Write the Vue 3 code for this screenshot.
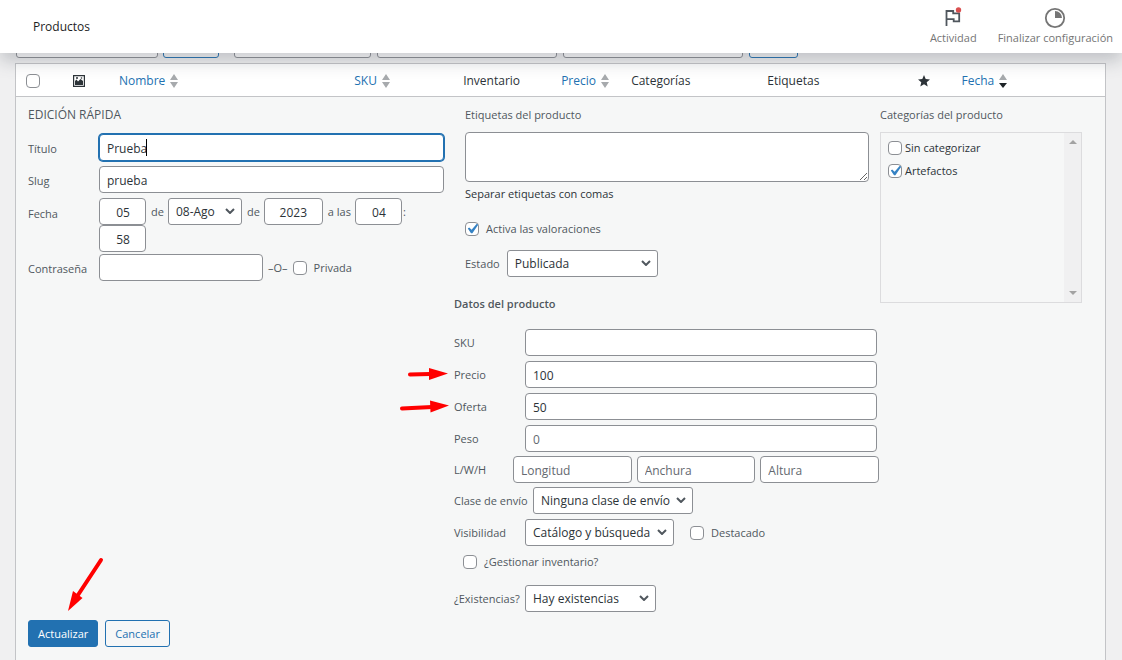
<script setup>
import { ref } from 'vue'

const titulo = ref('Prueba')
const slug = ref('prueba')
const dia = ref('05')
const anio = ref('2023')
const hora = ref('04')
const minuto = ref('58')
const clave = ref('')
const privada = ref(false)
const etiquetas = ref('')
const valoraciones = ref(true)
const destacado = ref(false)
const gestionar = ref(false)
const todos = ref(false)

const columnas = [
  { id: 'nombre', texto: 'Nombre', orden: true },
  { id: 'sku', texto: 'SKU', orden: true },
  { id: 'inventario', texto: 'Inventario' },
  { id: 'precio', texto: 'Precio', orden: true },
  { id: 'categorias', texto: 'Categorías' },
  { id: 'etiquetas', texto: 'Etiquetas' },
]

const categorias = ref([
  { id: 'sin', texto: 'Sin categorizar', activa: false },
  { id: 'art', texto: 'Artefactos', activa: true },
])

const datos = ref([
  { id: 'd-sku', texto: 'SKU', valor: '', flecha: '' },
  { id: 'd-precio', texto: 'Precio', valor: '100', flecha: 'corta' },
  { id: 'd-oferta', texto: 'Oferta', valor: '50', flecha: 'larga' },
])
</script>

<template>
  <div class="page">
    <header class="top">
      <h1>Productos</h1>
      <nav class="actions">
        <button type="button" class="action">
          <svg class="flag" viewBox="0 0 20 22" width="20" height="22" aria-hidden="true">
            <path d="M3.500 19V4h6.700v2.400h6v8h-5.500v-2.300H3.500" fill="none" stroke="#50575e" stroke-width="1.800" />
            <circle cx="15.500" cy="3" r="2.700" fill="#d94f4f" />
          </svg>
          <span>Actividad</span>
        </button>
        <button type="button" class="action">
          <svg viewBox="0 0 22 22" width="22" height="22" aria-hidden="true">
            <circle cx="11" cy="11" r="9.200" fill="none" stroke="#757575" stroke-width="1.800" />
            <path d="M11 4a7 7 0 0 1 7 7h-7z" fill="#757575" />
          </svg>
          <span>Finalizar configuración</span>
        </button>
      </nav>
    </header>

    <main>
      <div class="filters">
        <select class="f1" aria-label="Acciones en lote"></select>
        <button type="button" class="f2" aria-label="Aplicar"></button>
        <select class="f3" aria-label="Categoría"></select>
        <select class="f4" aria-label="Tipo de producto"></select>
        <select class="f4" aria-label="Estado de inventario"></select>
        <button type="button" class="f5" aria-label="Filtrar"></button>
      </div>

      <table class="list">
        <colgroup>
          <col class="c-check" />
          <col class="c-thumb" />
          <col />
          <col class="c-sku" />
          <col class="c-inv" />
          <col class="c-precio" />
          <col class="c-cat" />
          <col class="c-etq" />
          <col class="c-star" />
          <col class="c-fecha" />
        </colgroup>
        <thead>
          <tr>
            <th class="all"><input v-model="todos" type="checkbox" aria-label="Seleccionar todos" /></th>
            <th>
              <svg class="thumb" viewBox="0 0 12 12" width="12" height="12" aria-label="Imagen">
                <path fill-rule="evenodd" d="M0 0h12v12H0zM1.200 1.200v9.600h9.600V1.200z" fill="#2c3338" />
                <path d="M2 10V6l1.500-1.500L5 6.500 7.500 4 10 6v4z" fill="#2c3338" />
                <circle cx="4" cy="3" r="1" fill="#2c3338" />
                <circle cx="8.500" cy="3" r=".8" fill="#2c3338" />
              </svg>
            </th>
            <th v-for="c in columnas" :key="c.id">
              <a v-if="c.orden" href="#" class="sort">
                <span>{{ c.texto }}</span>
                <svg viewBox="0 0 8 14" width="8" height="14" aria-hidden="true">
                  <path d="M4 0l4 6H0zM4 14l4-6H0z" fill="#a7aaad" />
                </svg>
              </a>
              <template v-else>{{ c.texto }}</template>
            </th>
            <th>
              <svg class="star" viewBox="0 0 12 12" width="12" height="12" aria-label="Destacado">
                <path d="M6 0l1.700 4 4.300.4-3.300 2.800 1 4.300L6 9.200l-3.700 2.300 1-4.300L0 4.400 4.300 4z" fill="#2c3338" />
              </svg>
            </th>
            <th>
              <a href="#" class="sort">
                <span>Fecha</span>
                <svg viewBox="0 0 8 14" width="8" height="14" aria-hidden="true">
                  <path d="M4 0l4 6H0z" fill="#a7aaad" />
                  <path d="M4 14l4-5H0z" fill="#1d2327" />
                </svg>
              </a>
            </th>
          </tr>
        </thead>
        <tbody>
          <tr>
            <td colspan="10">
              <form class="quick" @submit.prevent>
                <div class="cols">
                  <fieldset class="left">
                    <legend>EDICIÓN RÁPIDA</legend>
                    <div class="row">
                      <label for="titulo">Título</label>
                      <span class="focused">
                        <input id="titulo" v-model="titulo" class="box" type="text" />
                        <i class="caret"></i>
                      </span>
                    </div>
                    <div class="row">
                      <label for="slug">Slug</label>
                      <input id="slug" v-model="slug" class="box grow" type="text" />
                    </div>
                    <div class="row date">
                      <label for="dia">Fecha</label>
                      <div class="parts">
                        <input id="dia" v-model="dia" class="box two" type="text" />
                        <span>de</span>
                        <span class="sel mes">
                          <select aria-label="Mes"><option>08-Ago</option></select>
                          <svg viewBox="0 0 10 6" width="10" height="6"><path d="M1 1l4 4 4-4" /></svg>
                        </span>
                        <span>de</span>
                        <input v-model="anio" class="box four" type="text" aria-label="Año" />
                        <span>a las</span>
                        <input v-model="hora" class="box two" type="text" aria-label="Hora" />
                        <span class="colon">:</span>
                        <input v-model="minuto" class="box two" type="text" aria-label="Minuto" />
                      </div>
                    </div>
                    <div class="row">
                      <label for="clave">Contraseña</label>
                      <input id="clave" v-model="clave" class="box pass" type="text" />
                      <span class="or">–O–</span>
                      <label class="check"><input v-model="privada" type="checkbox" />Privada</label>
                    </div>
                  </fieldset>

                  <div class="middle">
                    <div class="tags">
                      <label for="etq" class="head">Etiquetas del producto</label>
                      <textarea id="etq" v-model="etiquetas"></textarea>
                      <p>Separar etiquetas con comas</p>
                      <label class="check ratings"><input v-model="valoraciones" type="checkbox" />Activa las valoraciones</label>
                      <div class="status">
                        <label for="estado">Estado</label>
                        <span class="sel estado">
                          <select id="estado"><option>Publicada</option></select>
                          <svg viewBox="0 0 10 6" width="10" height="6"><path d="M1 1l4 4 4-4" /></svg>
                        </span>
                      </div>
                    </div>

                    <fieldset class="data">
                      <legend>Datos del producto</legend>
                      <div v-for="d in datos" :key="d.id" class="drow">
                        <label :for="d.id">{{ d.texto }}
                          <svg v-if="d.flecha === 'corta'" class="arrow" viewBox="0 0 50 14" width="50" height="14" aria-hidden="true">
                            <path d="M6 7.500l20-.5" stroke="#f00" stroke-width="4" stroke-linecap="round" />
                            <path d="M25 1l19 5.500-19 6.500z" fill="#f00" />
                          </svg>
                          <svg v-if="d.flecha === 'larga'" class="arrow" viewBox="0 0 50 14" width="50" height="14" aria-hidden="true">
                            <path d="M-2 9.500l30-1.500" stroke="#f00" stroke-width="4" stroke-linecap="round" />
                            <path d="M26 1.500l19 5-18.500 7z" fill="#f00" />
                          </svg>
                        </label>
                        <input :id="d.id" v-model="d.valor" class="box wide" type="text" />
                      </div>
                      <div class="drow tight">
                        <label for="peso">Peso</label>
                        <input id="peso" class="box wide" type="text" placeholder="0" />
                      </div>
                      <div class="drow dims tight">
                        <label for="largo">L/W/H</label>
                        <input id="largo" class="box" type="text" placeholder="Longitud" />
                        <input class="box" type="text" placeholder="Anchura" aria-label="Anchura" />
                        <input class="box" type="text" placeholder="Altura" aria-label="Altura" />
                      </div>
                      <div class="drow ship">
                        <label for="envio">Clase de envío</label>
                        <span class="sel envio">
                          <select id="envio"><option>Ninguna clase de envío</option></select>
                          <svg viewBox="0 0 10 6" width="10" height="6"><path d="M1 1l4 4 4-4" /></svg>
                        </span>
                      </div>
                      <div class="drow">
                        <label for="vis">Visibilidad</label>
                        <span class="sel vis">
                          <select id="vis"><option>Catálogo y búsqueda</option></select>
                          <svg viewBox="0 0 10 6" width="10" height="6"><path d="M1 1l4 4 4-4" /></svg>
                        </span>
                        <label class="check featured"><input v-model="destacado" type="checkbox" />Destacado</label>
                      </div>
                      <label class="check manage"><input v-model="gestionar" type="checkbox" />¿Gestionar inventario?</label>
                      <div class="drow">
                        <label for="exist">¿Existencias?</label>
                        <span class="sel exist">
                          <select id="exist"><option>Hay existencias</option></select>
                          <svg viewBox="0 0 10 6" width="10" height="6"><path d="M1 1l4 4 4-4" /></svg>
                        </span>
                      </div>
                    </fieldset>
                  </div>

                  <div class="right">
                    <span class="head">Categorías del producto</span>
                    <div class="cats">
                      <ul>
                        <li v-for="c in categorias" :key="c.id">
                          <label><input v-model="c.activa" type="checkbox" />{{ c.texto }}</label>
                        </li>
                      </ul>
                      <div class="track" aria-hidden="true">
                        <svg viewBox="0 0 8 4" width="8" height="4"><path d="M4 0l4 4H0z" /></svg>
                        <svg viewBox="0 0 8 4" width="8" height="4"><path d="M4 4l4-4H0z" /></svg>
                      </div>
                    </div>
                  </div>
                </div>

                <div class="submit">
                  <button type="submit" class="btn primary">Actualizar</button>
                  <button type="button" class="btn">Cancelar</button>
                  <svg class="pointer" viewBox="0 0 38 56" width="38" height="56" aria-hidden="true">
                    <path d="M34 5L11 40" stroke="#f00" stroke-width="4" stroke-linecap="round" />
                    <path d="M1 56l5-20 9.500 7z" fill="#f00" />
                  </svg>
                </div>
              </form>
            </td>
          </tr>
        </tbody>
      </table>
    </main>
  </div>
</template>

<style>
body {
  margin: 0;
  background: #f0f0f1;
}
</style>

<style scoped>
.page {
  font: 11px/16px "Open Sans", "Noto Sans", sans-serif;
  color: #50575e;
}
* {
  box-sizing: border-box;
}
.top {
  position: relative;
  z-index: 2;
  display: flex;
  align-items: center;
  justify-content: space-between;
  height: 53px;
  padding: 0 9px 0 33px;
  background: #fff;
  box-shadow: 0 8px 16px rgba(85, 93, 102, 0.3);
}
h1 {
  margin: 0;
  font-size: 12px;
  font-weight: 500;
  color: #1e1e1e;
}
.actions {
  display: flex;
  gap: 21px;
}
.action {
  display: flex;
  flex-direction: column;
  align-items: center;
  gap: 1px;
  padding: 0;
  border: 0;
  background: none;
  font: inherit;
  color: #757575;
}
main {
  padding: 0 16px 0 15px;
}
.filters {
  display: flex;
  align-items: flex-end;
  height: 10px;
  padding: 0 1px 5px;
  overflow: hidden;
}
.filters select,
.filters button {
  flex: none;
  appearance: none;
  height: 28px;
  margin: 0 6px 0 0;
  border: 1px solid #8c8f94;
  border-radius: 3px;
  background: #fff;
}
.filters button {
  border-color: #2271b1;
  background: #f6f7f7;
}
.filters .f1 { width: 142px; margin-right: 5px; }
.filters .f2 { width: 56px; margin-right: 15px; }
.filters .f3 { width: 137px; }
.filters .f4 { width: 180px; }
.filters .f5 { width: 49px; }

.list {
  width: 100%;
  table-layout: fixed;
  border-collapse: separate;
  border-spacing: 0;
  border: 1px solid #c3c4c7;
  border-bottom: 0;
  background: #fff;
}
.c-check { width: 48px; }
.c-thumb { width: 46px; }
.c-sku { width: 10%; }
.c-inv { width: 9%; }
.c-precio { width: 70px; }
.c-cat { width: 12.5%; }
.c-etq { width: 13.8%; }
.c-star { width: 44px; }
.c-fecha { width: 14%; }
th {
  height: 33px;
  padding: 1px 0 0 9px;
  border-bottom: 1px solid #c3c4c7;
  text-align: left;
  font-size: 12px;
  font-weight: 400;
  color: #2c3338;
  white-space: nowrap;
}
th.all {
  padding-left: 10px;
}
th svg,
th input {
  display: block;
}
.sort {
  display: flex;
  align-items: center;
  gap: 5px;
  color: #2271b1;
  text-decoration: none;
}
td {
  padding: 0;
  background: #f6f7f7;
}
.quick {
  padding: 10px 23px 13px 12px;
}
.cols {
  display: grid;
  grid-template-columns: minmax(0, 426fr) minmax(0, 426fr) minmax(0, 202fr);
}
fieldset {
  min-width: 0;
  margin: 0;
  padding: 0;
  border: 0;
}
legend {
  padding: 0;
  font-weight: 600;
}
.left {
  padding-right: 10px;
}
.left legend {
  font-size: 12px;
  font-weight: 400;
  margin-bottom: 11px;
}
.row {
  display: flex;
  align-items: center;
  margin-bottom: 5px;
}
.row > label:first-child {
  flex: none;
  width: 71px;
  padding-top: 2px;
}
.box,
.sel select {
  height: 27px;
  margin: 0;
  padding: 1px 7px 0;
  border: 1px solid #8c8f94;
  border-radius: 4px;
  outline: 0;
  background: #fff;
  font: 12px/24px "Open Sans", "Noto Sans", sans-serif;
  color: #2c3338;
}
.box {
  min-width: 0;
}
.box::placeholder {
  color: #646970;
  opacity: 1;
}
.grow {
  flex: 1;
}
.focused {
  position: relative;
  flex: 1;
  display: flex;
}
.focused .box {
  flex: 1;
  border-color: #2271b1;
  box-shadow: 0 0 0 1px #2271b1;
}
.caret {
  position: absolute;
  top: 5px;
  left: 47px;
  width: 1px;
  height: 17px;
  background: #000;
}
.date {
  align-items: flex-start;
  margin-bottom: 2px;
}
.date > label:first-child {
  line-height: 27px;
}
.parts {
  flex: 1;
  display: flex;
  flex-wrap: wrap;
  align-items: center;
}
.parts > span:not(.sel) {
  margin: 0 4px 0 5px;
}
.parts > .colon:not(.sel) {
  flex: 1;
  margin: 0 1px;
  min-width: 30px;
}
.parts .two {
  width: 47px;
  padding-right: 6px;
  text-align: center;
}
.four {
  width: 59px;
  text-align: center;
}
.pass {
  width: 164px;
}
.or {
  margin: 0 5px;
}
.sel {
  position: relative;
  display: flex;
}
.sel select {
  appearance: none;
  width: 100%;
  padding-right: 20px;
  border-radius: 3px;
}
.sel svg {
  position: absolute;
  right: 7px;
  top: 10px;
  fill: none;
  stroke: #50575e;
  stroke-width: 2;
  pointer-events: none;
}
.mes { width: 74px; }
.estado { width: 151px; }
.envio { width: 160px; }
.vis { width: 149px; }
.exist { width: 131px; }

input[type="checkbox"] {
  appearance: none;
  flex: none;
  display: flex;
  align-items: center;
  justify-content: center;
  width: 14px;
  height: 14px;
  margin: 0;
  border: 1px solid #8c8f94;
  border-radius: 4px;
  background: #fff;
}
input[type="checkbox"]:checked::before {
  content: "";
  flex: none;
  width: 20px;
  height: 20px;
  margin: 0 -4px;
  background: #3582c4;
  clip-path: polygon(74% 24%, 81% 29%, 52% 71%, 45% 71%, 29% 48%, 36% 42%, 48% 54%);
}
.check {
  display: flex;
  align-items: center;
  gap: 7px;
}
.head {
  display: block;
  margin-bottom: 9px;
}
.tags {
  padding: 0 11px;
}
textarea {
  display: block;
  width: 100%;
  height: 50px;
  margin: 0;
  border: 1px solid #8c8f94;
  border-radius: 4px;
  background: #fff;
  font: inherit;
  resize: vertical;
}
.tags p {
  margin: 4px 0 19px;
  color: #2c3338;
}
.status {
  display: flex;
  align-items: center;
  gap: 7px;
  margin-top: 13px;
}
.data {
  margin-top: 19px;
}
.data legend {
  margin-bottom: 17px;
}
.drow {
  display: flex;
  align-items: center;
  margin-bottom: 5px;
  padding-right: 3px;
}
.tight {
  margin-bottom: 4px;
}
.drow > label:first-child {
  position: relative;
  flex: none;
  width: 71px;
  white-space: nowrap;
}
.wide {
  flex: 1;
}
.dims {
  gap: 5px;
  padding-right: 1px;
}
.dims > label:first-child {
  width: 54px;
}
.dims .box {
  flex: 1;
}
.ship > label:first-child {
  width: 79px;
}
.featured {
  margin-left: 16px;
}
.manage {
  margin: 8px 0 15px 9px;
}
.arrow {
  position: absolute;
  top: 0;
  left: -50px;
  overflow: visible;
}
.cats {
  display: flex;
  justify-content: space-between;
  height: 171px;
  border: 1px solid #dcdcde;
}
ul {
  margin: 0;
  padding: 7px;
  list-style: none;
  color: #2c3338;
}
li {
  margin-bottom: 7px;
}
li label {
  display: flex;
  align-items: center;
  gap: 3px;
}
.track {
  display: flex;
  flex-direction: column;
  justify-content: space-between;
  align-items: center;
  width: 17px;
  padding: 7px 0;
  background: #f0f0f1;
  fill: #a3a3a3;
}
.submit {
  position: relative;
  display: flex;
  gap: 7px;
  margin-top: 3px;
}
.btn {
  height: 27px;
  padding: 0 9px;
  border: 1px solid #2271b1;
  border-radius: 3px;
  background: #f6f7f7;
  font: inherit;
  color: #2271b1;
}
.primary {
  background: #2271b1;
  color: #fff;
}
.pointer {
  position: absolute;
  left: 39px;
  bottom: 36px;
}
</style>
